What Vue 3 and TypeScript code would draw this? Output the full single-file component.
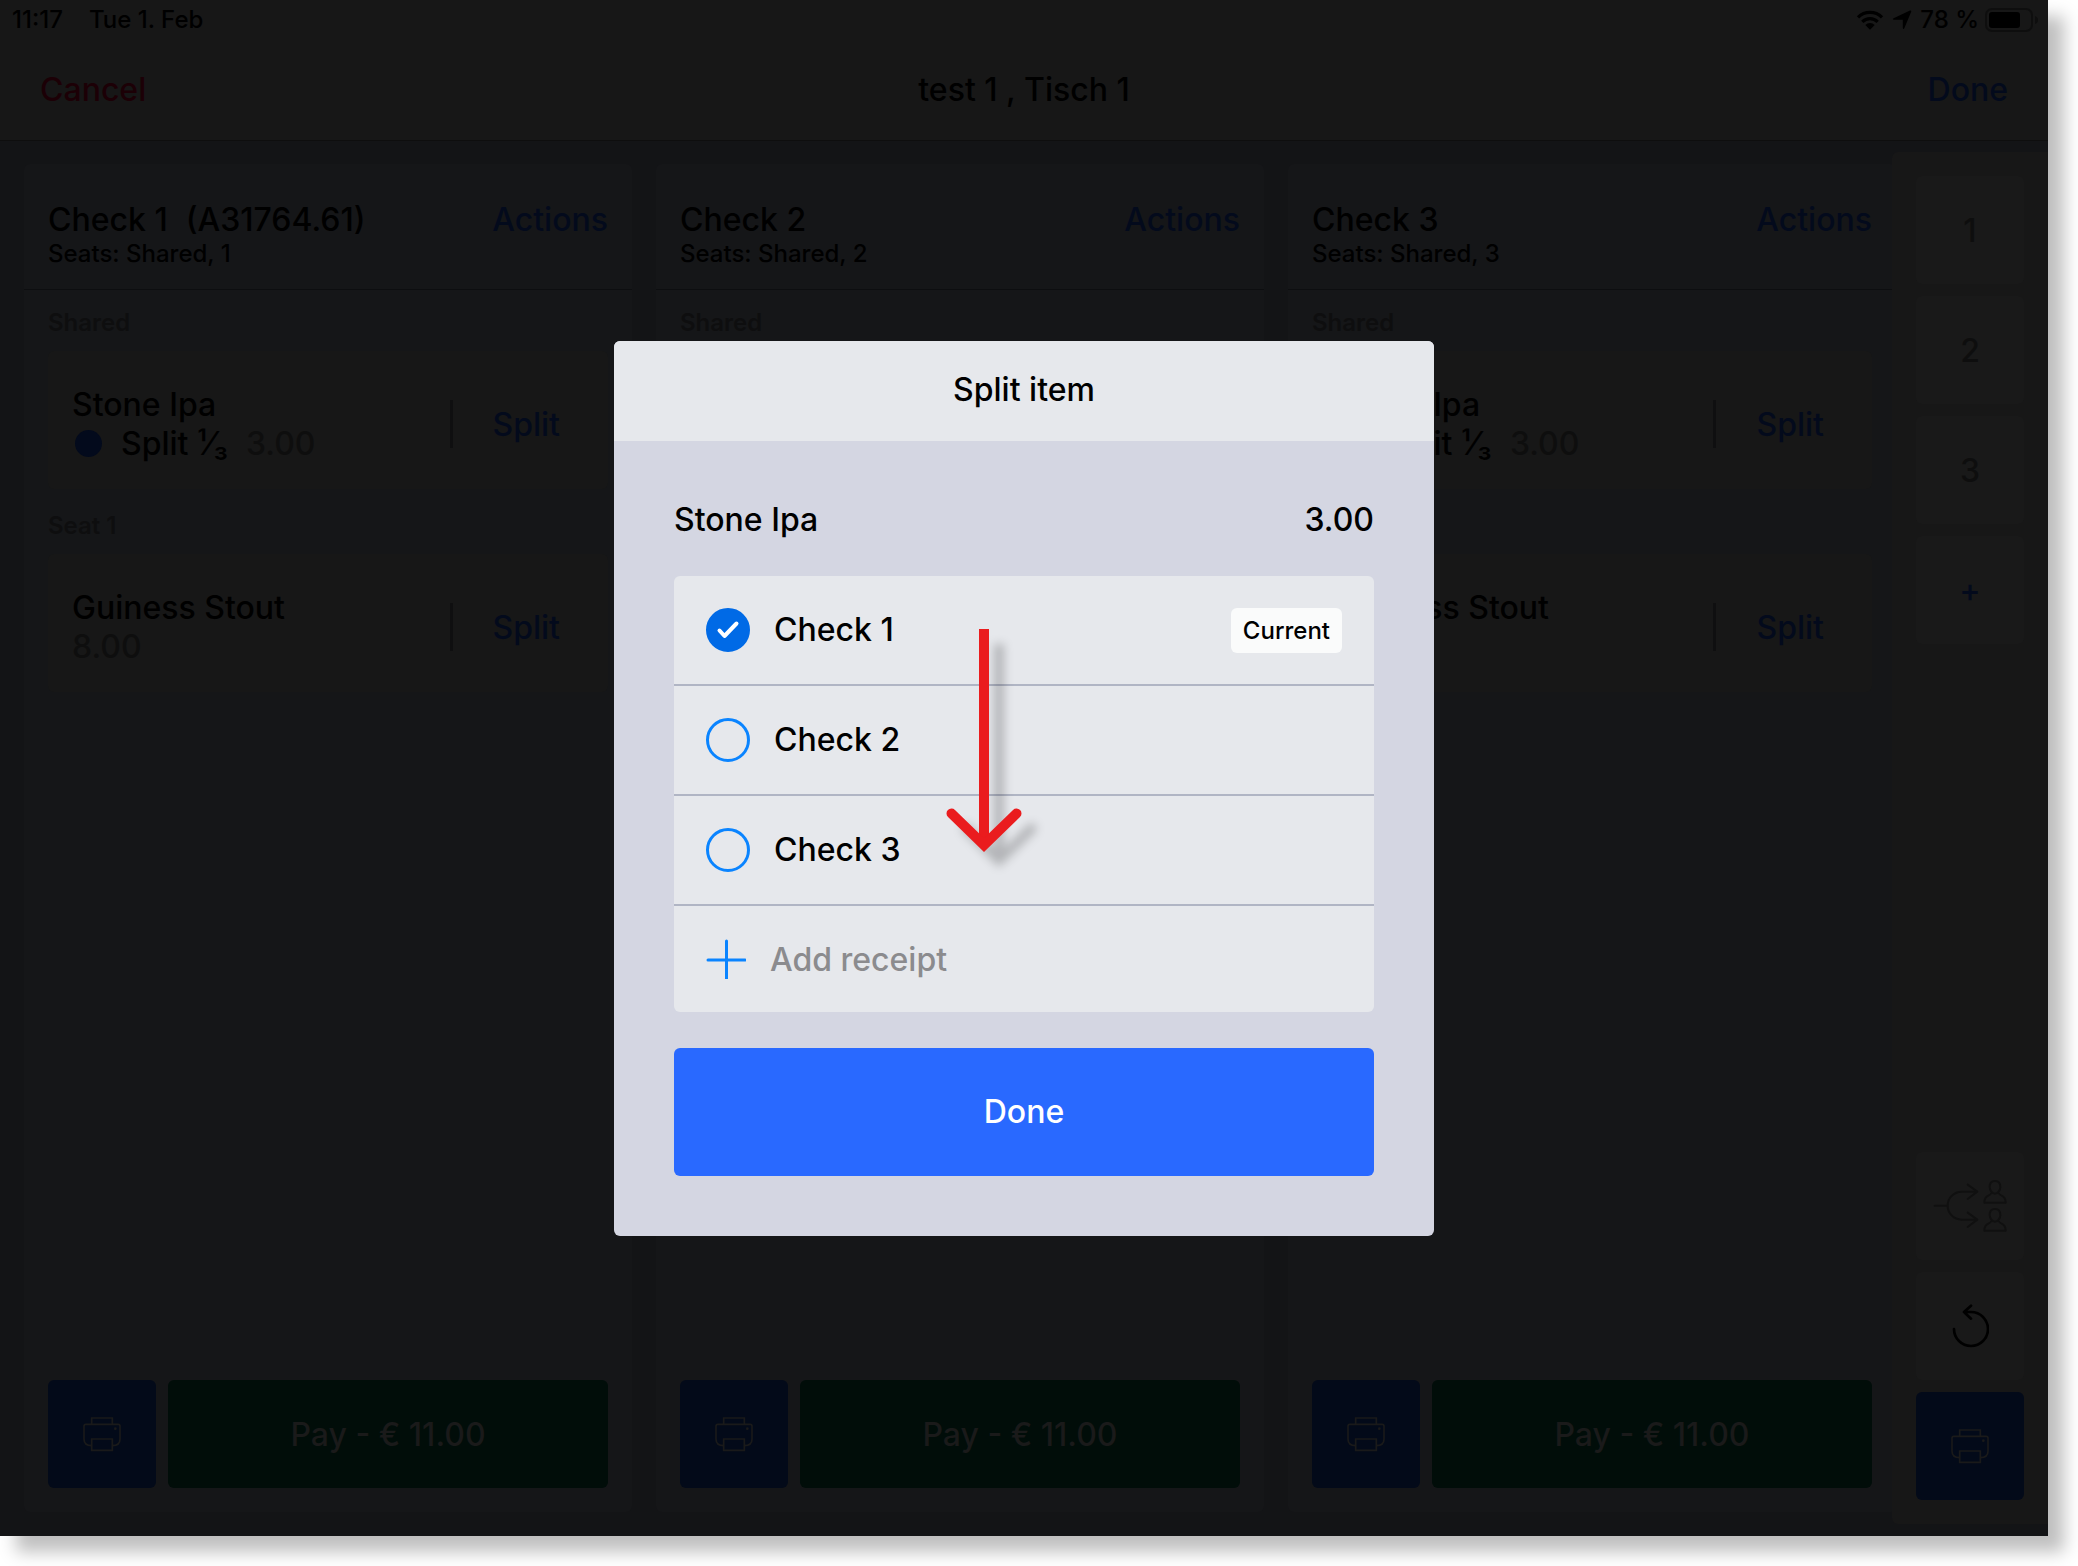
<script setup lang="ts">
import { ref } from 'vue'

interface Item {
  name: string
  price: string
  share?: string
}

interface Group {
  label: string
  items: Item[]
}

interface Check {
  id: number
  title: string
  receipt?: string
  seats: string
  groups: Group[]
  total: string
}

function groupsFor(seat: number): Group[] {
  return [
    { label: 'Shared', items: [{ name: 'Stone Ipa', share: 'Split ¹⁄₃', price: '3.00' }] },
    { label: `Seat ${seat}`, items: [{ name: 'Guiness Stout', price: '8.00' }] },
  ]
}

const checks: Check[] = [
  { id: 1, title: 'Check 1', receipt: '(A31764.61)', seats: 'Seats: Shared, 1', groups: groupsFor(1), total: 'Pay - € 11.00' },
  { id: 2, title: 'Check 2', seats: 'Seats: Shared, 2', groups: groupsFor(2), total: 'Pay - € 11.00' },
  { id: 3, title: 'Check 3', seats: 'Seats: Shared, 3', groups: groupsFor(3), total: 'Pay - € 11.00' },
]

const seats = ['1', '2', '3']
const selected = ref<number[]>([1])
const currentCheck = 1
</script>

<template>
  <div class="page">
    <div class="screen">
      <header class="top">
        <div class="status">
          <span>11:17</span>
          <span class="date">Tue 1. Feb</span>
          <svg class="wifi" width="28" height="20" viewBox="0 0 28 20" aria-hidden="true">
            <path d="M2 7.4A17 17 0 0 1 26 7.4M6.3 11.8A11 11 0 0 1 21.7 11.8" fill="none" stroke="#000" stroke-width="3.2" />
            <path d="M9.3 15A6.6 6.6 0 0 1 18.7 15L14 19.8Z" />
          </svg>
          <svg class="location" width="20" height="20" viewBox="0 0 20 20" aria-hidden="true">
            <path d="M18 .6Q19.600 .2 19.200 1.800L12.200 18.400Q11.200 19.800 10.800 17.800V9.800H2Q-.2 9.400 1.600 8.200Z" />
          </svg>
          <span>78 %</span>
          <svg class="battery" width="54" height="24" viewBox="0 0 54 24" aria-hidden="true">
            <rect x="1" y="1" width="46" height="22" rx="6" fill="none" stroke="#0e0e0e" stroke-width="2" />
            <rect x="4" y="4" width="31" height="16" rx="3" />
            <path d="M50 8Q53 9 53 12T50 16Z" fill="#0e0e0e" />
          </svg>
        </div>
        <nav class="nav">
          <button class="cancel" type="button">Cancel</button>
          <h1>test 1 , Tisch 1</h1>
          <button class="link done" type="button">Done</button>
        </nav>
      </header>

      <main class="workspace">
        <div class="board">
          <section v-for="check in checks" :key="check.id" class="check">
            <header class="check-head">
              <div>
                <h2>{{ check.title }}<span v-if="check.receipt" class="receipt">{{ check.receipt }}</span></h2>
                <p>{{ check.seats }}</p>
              </div>
              <button class="link" type="button">Actions</button>
            </header>
            <div class="groups">
              <div v-for="group in check.groups" :key="group.label" class="group">
                <h3>{{ group.label }}</h3>
                <article v-for="item in group.items" :key="item.name" class="item">
                  <div class="item-info">
                    <div>{{ item.name }}</div>
                    <div class="detail">
                      <template v-if="item.share">
                        <i class="dot"></i>
                        <span class="share">{{ item.share }}</span>
                      </template>
                      <span class="price">{{ item.price }}</span>
                    </div>
                  </div>
                  <button class="link split" type="button">Split</button>
                </article>
              </div>
            </div>
            <footer class="check-foot">
              <button class="tile print" type="button" aria-label="Print">
                <svg width="38" height="34" viewBox="0 0 114 102" aria-hidden="true">
                  <path d="M26 22V3H88V22M26 86Q3 86 3 66V27Q3 22 8 22H106Q111 22 111 27V66Q111 86 88 86M26 66H88V100H26Z" />
                  <circle cx="97" cy="35" r="4" />
                </svg>
              </button>
              <button class="pay" type="button">{{ check.total }}</button>
            </footer>
          </section>
        </div>

        <aside class="tools">
          <button v-for="seat in seats" :key="seat" class="tile" type="button">{{ seat }}</button>
          <button class="tile add-seat" type="button">+</button>
          <button class="tile bottom-start" type="button" aria-label="Split between guests">
            <svg width="74" height="54" viewBox="0 0 222 162" aria-hidden="true">
              <path
                d="M5 80H43M133 38H86A42 42 0 0 0 86 122H133M104 17L133 38L104 60M104 101L133 122L104 144"
                fill="none" stroke="#101010" stroke-width="6" stroke-linecap="round" stroke-linejoin="round"
              />
              <g fill="none" stroke="#101010" stroke-width="6" stroke-linejoin="round">
                <path d="M186 6C175 6 170 14 170 24S178 44 186 44S202 34 202 24S197 6 186 6ZM175 42Q173 47 166 50Q154 55 154 71H218Q218 55 206 50Q199 47 197 42" />
                <path d="M186 90C175 90 170 98 170 108S178 128 186 128S202 118 202 108S197 90 186 90ZM175 126Q173 131 166 134Q154 139 154 155H218Q218 139 206 134Q199 131 197 126" />
              </g>
            </svg>
          </button>
          <button class="tile" type="button" aria-label="Undo">
            <svg width="38" height="44" viewBox="-3 0 114 132" aria-hidden="true">
              <path
                d="M6 75A51 51 0 1 0 57 24H36M57 5L36 24L57 44"
                fill="none" stroke="#000" stroke-width="8" stroke-linecap="round" stroke-linejoin="round"
              />
            </svg>
          </button>
          <button class="tile print" type="button" aria-label="Print all">
            <svg width="38" height="34" viewBox="0 0 114 102" aria-hidden="true">
              <path d="M26 22V3H88V22M26 86Q3 86 3 66V27Q3 22 8 22H106Q111 22 111 27V66Q111 86 88 86M26 66H88V100H26Z" />
              <circle cx="97" cy="35" r="4" />
            </svg>
          </button>
        </aside>
      </main>

      <div class="overlay">
        <div class="dialog" role="dialog" aria-modal="true" aria-labelledby="dialog-title">
          <h2 id="dialog-title" class="dialog-title">Split item</h2>
          <div class="dialog-body">
            <div class="summary">
              <span>Stone Ipa</span>
              <span>3.00</span>
            </div>
            <div class="options">
              <label v-for="check in checks" :key="check.id" class="option">
                <span class="tick">
                  <input v-model="selected" type="checkbox" :value="check.id" />
                  <svg v-if="selected.includes(check.id)" width="44" height="44" viewBox="0 0 44 44" aria-hidden="true">
                    <path d="M13.500 22.500L18.500 28L30.500 15.500" fill="none" stroke="#fff" stroke-width="4" stroke-linecap="round" stroke-linejoin="round" />
                  </svg>
                </span>
                <span class="option-name">{{ check.title }}</span>
                <span v-if="check.id === currentCheck" class="badge">Current</span>
              </label>
              <button class="option add" type="button">
                <svg width="40" height="40" viewBox="0 0 40 40" aria-hidden="true">
                  <path d="M20.500 2V40M2 21H39" stroke="#0a84ff" stroke-width="3" stroke-linecap="round" />
                </svg>
                <span>Add receipt</span>
              </button>
            </div>
            <button class="confirm" type="button">Done</button>
          </div>
          <svg class="pointer" width="76" height="224" viewBox="0 0 76 224" aria-hidden="true">
            <path d="M38 0V214" fill="none" stroke="#ea1c1e" stroke-width="10" />
            <path d="M5.500 184.500L38 216L70.500 184.500" fill="none" stroke="#ea1c1e" stroke-width="10" stroke-linecap="round" />
          </svg>
        </div>
      </div>
    </div>
  </div>
</template>

<style>
body {
  background: #fff;
}
</style>

<style scoped>
* {
  box-sizing: border-box;
}

h1,
h2,
h3,
p {
  margin: 0;
  font: inherit;
}

button {
  padding: 0;
  border: 0;
  background: none;
  color: inherit;
  font: inherit;
  cursor: pointer;
}

.page {
  display: flex;
  min-height: 100vh;
  padding: 0 30px 30px 0;
  overflow: hidden;
  font: 500 32px/39px Inter, "Liberation Sans", sans-serif;
  color: #000;
}

.screen {
  position: relative;
  display: flex;
  flex: 1;
  min-width: 0;
  flex-direction: column;
  background: #131416;
  box-shadow: 16px 16px 16px rgba(0, 0, 0, 0.25);
}

.top {
  height: 140px;
  background: #171717;
  box-shadow: 0 1px #0e0e0e;
}

.status {
  display: flex;
  align-items: center;
  height: 39px;
  padding: 0 9px 0 12px;
  font-size: 24px;
}

.date {
  margin: 0 auto 0 26px;
}

.location {
  margin: 0 8px;
}

.battery {
  margin-left: 6px;
}

.nav {
  display: grid;
  grid-template-columns: 1fr auto 1fr;
  align-items: center;
  height: 100px;
  padding: 0 40px;
}

.cancel {
  justify-self: start;
  color: #1c0006;
}

.done {
  justify-self: end;
}

.link {
  color: #030a1c;
}

.workspace {
  display: flex;
  flex: 1;
  padding: 12px 0;
}

.board {
  display: flex;
  flex: 1;
  gap: 24px;
  min-width: 0;
  padding: 12px 0 12px 24px;
  overflow: hidden;
}

.check {
  display: flex;
  flex: 0 0 calc((100% - 44px) / 3);
  flex-direction: column;
  border-radius: 6px;
  background: #151618;
}

.check-head {
  display: flex;
  justify-content: space-between;
  height: 126px;
  padding: 36px 24px 0;
  border-bottom: 1px solid #0d0e10;
}

.check-head .link {
  align-self: flex-start;
}

.check-head p {
  font-size: 24px;
  line-height: 30px;
}

.receipt {
  margin-left: 18px;
}

.groups {
  flex: 1;
  padding: 0 24px;
}

.group h3 {
  padding-top: 17px;
  color: #0e0e0f;
  font-size: 24px;
  font-weight: 600;
  line-height: 32px;
}

.item {
  display: flex;
  align-items: center;
  justify-content: space-between;
  height: 138px;
  margin: 12px 0 4px;
  padding: 8px 48px 0 24px;
  border-radius: 6px;
  background: #171717;
}

.detail {
  display: flex;
  align-items: center;
}

.dot {
  width: 27px;
  height: 27px;
  margin: 0 19px 0 3px;
  border-radius: 50%;
  background: #030a1c;
}

.share {
  margin-right: 18px;
}

.price {
  color: #0e0e0e;
}

.split {
  height: 48px;
  padding-left: 40px;
  border-left: 3px solid #0f0f10;
}

.check-foot {
  display: flex;
  gap: 12px;
  padding: 24px;
}

.tile {
  display: flex;
  flex: none;
  align-items: center;
  justify-content: center;
  width: 108px;
  height: 108px;
  border-radius: 6px;
  background: #191919;
  color: #0e0e0e;
}

.print {
  background: #030a19;
}

.print svg {
  overflow: visible;
  fill: none;
  stroke: #1a1a1a;
  stroke-width: 5;
}

.print circle {
  fill: #1a1a1a;
  stroke: none;
}

.pay {
  flex: 1;
  border-radius: 6px;
  background: #010d09;
  color: #1a1a1a;
}

.tools {
  display: flex;
  flex: none;
  flex-direction: column;
  gap: 12px;
  padding: 24px;
  border-radius: 6px 0 0 6px;
  background: #171717;
}

.add-seat {
  color: #030a1c;
}

.bottom-start {
  margin-top: auto;
}

.overlay {
  position: absolute;
  inset: 0;
  display: flex;
  align-items: center;
  justify-content: center;
  padding-top: 41px;
}

.dialog {
  position: relative;
  width: 40%;
  min-width: 820px;
  border-radius: 6px;
  background: #d4d6e2;
}

.dialog-title {
  height: 100px;
  border-radius: 6px 6px 0 0;
  background: #e6e8ec;
  line-height: 98px;
  text-align: center;
}

.dialog-body {
  display: flex;
  flex-direction: column;
  padding: 59px 60px 60px;
}

.summary {
  display: flex;
  justify-content: space-between;
  margin-bottom: 37px;
}

.options {
  overflow: hidden;
  border-radius: 6px;
  background: #e6e8ec;
}

.option {
  display: flex;
  align-items: center;
  width: 100%;
  height: 110px;
  padding: 0 32px;
  border-bottom: 2px solid #b0b5c4;
}

.option-name {
  padding-bottom: 2px;
}

.tick {
  position: relative;
  width: 44px;
  height: 44px;
  margin-right: 24px;
}

.tick input {
  display: block;
  width: 44px;
  height: 44px;
  margin: 0;
  border: 3px solid #0a84ff;
  border-radius: 50%;
  appearance: none;
}

.tick input:checked {
  border-color: #006ae6;
  background: #006ae6;
}

.tick svg {
  position: absolute;
  inset: 0;
  pointer-events: none;
}

.badge {
  margin-left: auto;
  padding: 0 12px;
  border-radius: 6px;
  background: #fafbfb;
  font-size: 24px;
  line-height: 45px;
}

.add {
  gap: 24px;
  height: 106px;
  border-bottom: 0;
  color: #8b8b8e;
}

.confirm {
  height: 128px;
  margin-top: 36px;
  padding-bottom: 2px;
  border-radius: 6px;
  background: #2969ff;
  color: #fff;
}

.pointer {
  position: absolute;
  top: 288px;
  left: calc(50% - 78px);
  overflow: visible;
  filter: drop-shadow(15px 15px 5px rgba(0, 0, 0, 0.22));
  pointer-events: none;
}
</style>
